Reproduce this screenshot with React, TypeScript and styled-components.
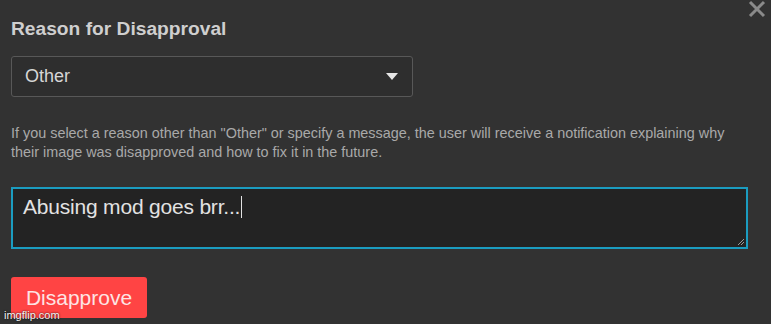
import React from 'react';
import styled, { createGlobalStyle } from 'styled-components';

const GlobalStyle = createGlobalStyle`
  html, body {
    margin: 0;
    padding: 0;
    background: #323232;
    font-family: "Liberation Sans", Arial, sans-serif;
  }
`;

const Panel = styled.div`
  position: relative;
  width: 771px;
  height: 324px;
  box-sizing: border-box;
  padding: 18px 23px 0 11px;
  background: #323232;
  overflow: hidden;
`;

const Title = styled.h3`
  margin: 0 0 16px;
  font-size: 19.2px;
  font-weight: bold;
  color: #cfcfcf;
  line-height: 22px;
`;

const SelectBox = styled.div`
  width: 402px;
  height: 41px;
  box-sizing: border-box;
  border: 1px solid #585858;
  border-radius: 3px;
  background: #2e2e2e;
  display: flex;
  align-items: center;
  justify-content: space-between;
  padding: 0 14px 0 13px;
  color: #d6d6d6;
  font-size: 18px;
`;

const Arrow = styled.span`
  width: 0;
  height: 0;
  border-left: 6.5px solid transparent;
  border-right: 6.5px solid transparent;
  border-top: 7px solid #e6e6e6;
`;

const Help = styled.p`
  margin: 27px 0 0;
  font-size: 14.4px;
  line-height: 19px;
  color: #a9a9a9;
  white-space: nowrap;
`;

const Message = styled.div`
  position: relative;
  margin-top: 25px;
  width: 737px;
  height: 62px;
  box-sizing: border-box;
  border: 2px solid #1b9cc0;
  background: #232323;
  padding: 6px 10px;
  color: #e2e2e2;
  font-size: 21px;
  letter-spacing: -0.2px;
`;

const Caret = styled.span`
  display: inline-block;
  width: 1px;
  height: 22px;
  background: #e2e2e2;
  vertical-align: -4px;
  margin-left: 1px;
`;

const Grip = styled.svg`
  position: absolute;
  right: 1px;
  bottom: 1px;
`;

const DangerButton = styled.button`
  display: block;
  margin-top: 28px;
  width: 136px;
  height: 41px;
  border: none;
  border-radius: 3px;
  background: #ff4444;
  color: #fde4e4;
  font-family: "Liberation Sans", Arial, sans-serif;
  font-size: 21px;
  padding: 0;
`;

const Close = styled.div`
  position: absolute;
  top: 0;
  right: 4px;
  width: 20px;
  height: 20px;
`;

const Watermark = styled.div`
  position: absolute;
  left: 4px;
  bottom: 3px;
  font-size: 11px;
  color: #f4f4f4;
  text-shadow: 0 0 2px #000;
`;

export default function App() {
  return (
    <>
      <GlobalStyle />
      <Panel>
        <Close>
          <svg width="20" height="20" viewBox="0 0 20 20">
            <path d="M3 2 L17 16 M17 2 L3 16" stroke="#8a8a8a" strokeWidth="3" />
          </svg>
        </Close>
        <Title>Reason for Disapproval</Title>
        <SelectBox>
          <span>Other</span>
          <Arrow />
        </SelectBox>
        <Help>
          If you select a reason other than "Other" or specify a message, the user will receive a notification explaining why
          <br />
          their image was disapproved and how to fix it in the future.
        </Help>
        <Message>
          Abusing mod goes brr...
          <Caret />
          <Grip width="8" height="8" viewBox="0 0 8 8">
            <path d="M7 1 L1 7 M7 4 L4 7" stroke="#9a9a9a" strokeWidth="1" />
          </Grip>
        </Message>
        <DangerButton>Disapprove</DangerButton>
        <Watermark>imgflip.com</Watermark>
      </Panel>
    </>
  );
}
